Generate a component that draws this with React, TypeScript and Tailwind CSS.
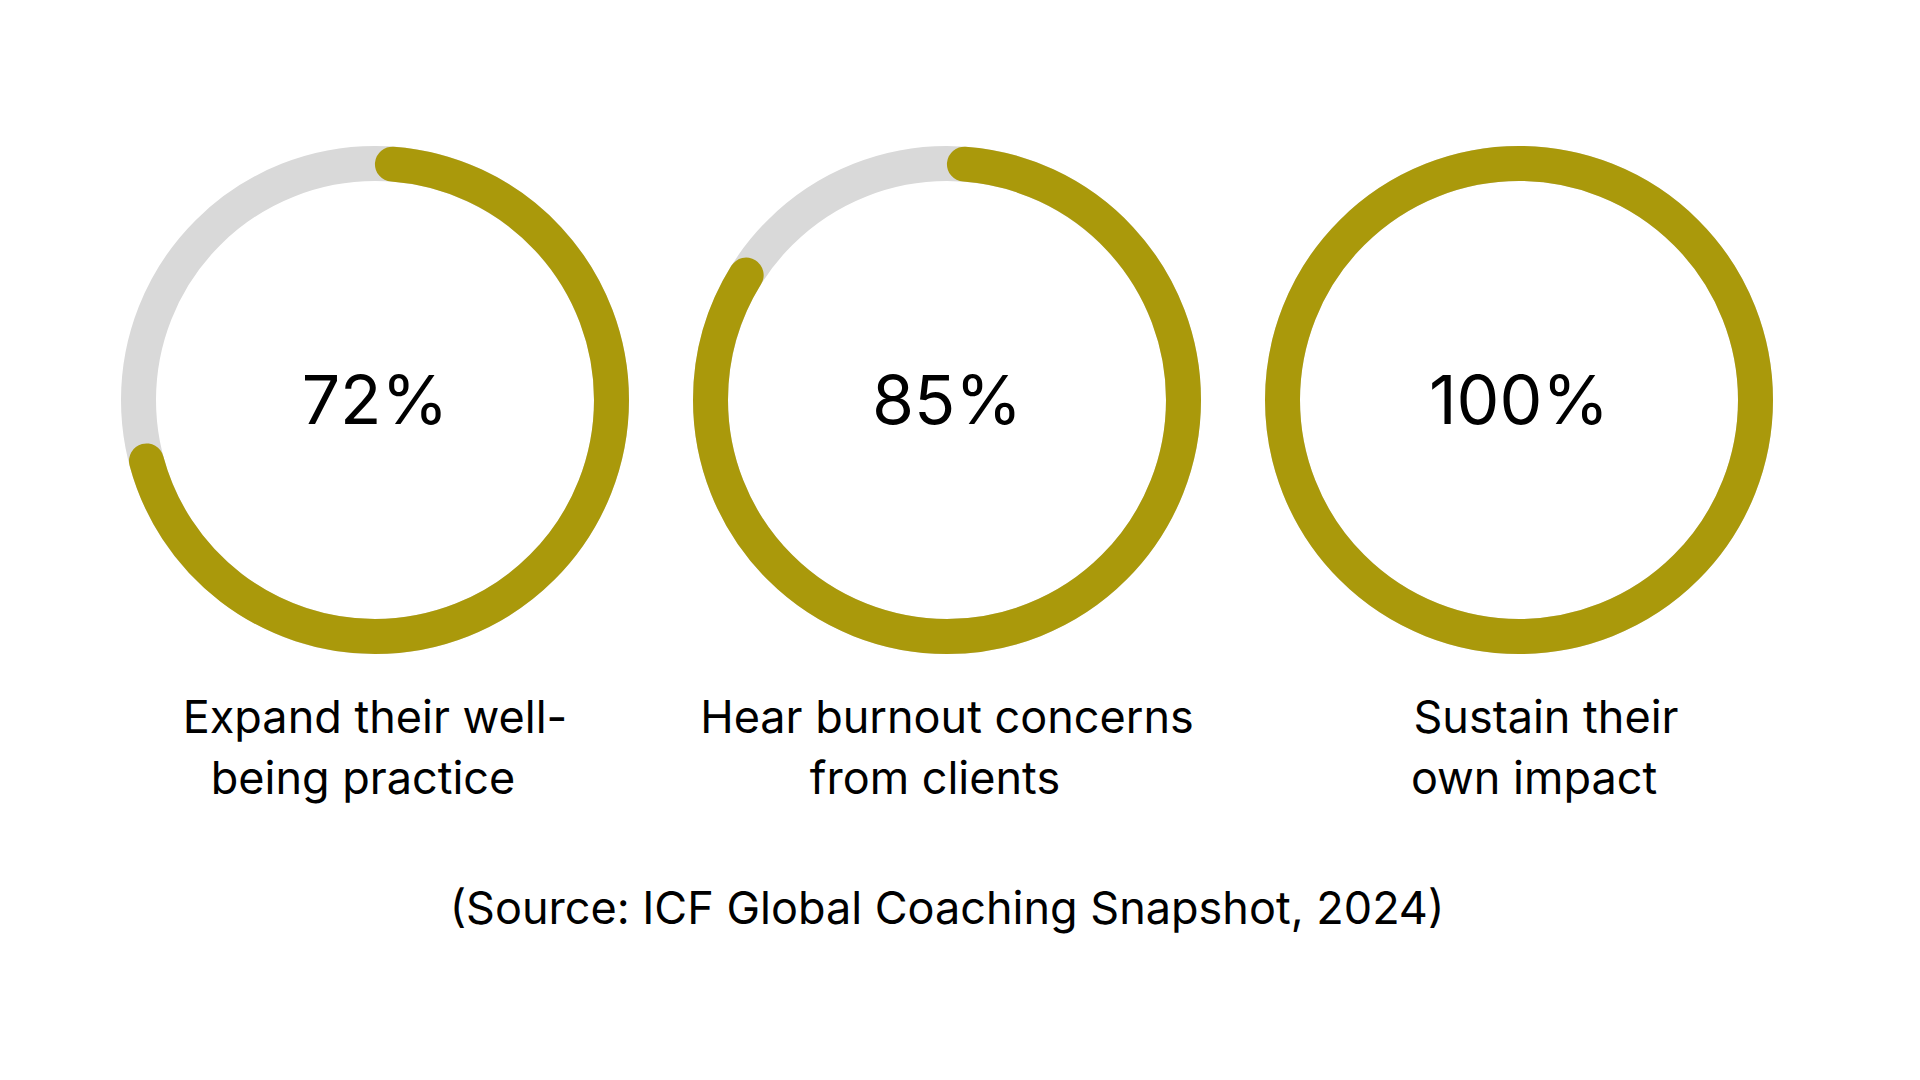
import React from "react";

const GOLD = "#aa990b";
const TRACK = "#d9d9d9";

type Stat = {
  pct: number;
  lines: [string, string];
  shift?: string;
};

const stats: Stat[] = [
  { pct: 72, lines: ["Expand their well-", "being practice"] },
  { pct: 85, lines: ["Hear burnout concerns", "from clients"] },
  { pct: 100, lines: ["Sustain their", "own impact"], shift: "pl-[54px]" },
];

function Ring({ pct }: { pct: number }) {
  const size = 508;
  const stroke = 35;
  const r = (size - stroke) / 2;
  const c = 2 * Math.PI * r;
  const mid = size / 2;
  // round caps stick out by stroke/2 on each end, so trim the dash to keep the arc at pct
  const len = (pct / 100) * c - stroke;

  return (
    <svg width={size} height={size} viewBox={`0 0 ${size} ${size}`} className="[grid-area:1/1]">
      <circle cx={mid} cy={mid} r={r} fill="none" stroke={TRACK} strokeWidth={stroke} />
      {pct >= 100 ? (
        <circle cx={mid} cy={mid} r={r} fill="none" stroke={GOLD} strokeWidth={stroke} />
      ) : (
        <circle
          cx={mid}
          cy={mid}
          r={r}
          fill="none"
          stroke={GOLD}
          strokeWidth={stroke}
          strokeLinecap="round"
          strokeDasharray={`${len} ${c}`}
          strokeDashoffset={-stroke / 2}
          transform={`rotate(-90 ${mid} ${mid})`}
        />
      )}
    </svg>
  );
}

function StatColumn({ stat }: { stat: Stat }) {
  return (
    <div className="flex w-[572px] flex-col items-center">
      <div className="grid place-items-center">
        <Ring pct={stat.pct} />
        <span className="[grid-area:1/1] pb-[3px] text-[68px] leading-none text-black">{stat.pct}%</span>
      </div>
      <div className={`mt-[32px] flex flex-col items-center text-[45px] leading-[61px] text-black ${stat.shift ?? ""}`}>
        <span className="whitespace-nowrap">{stat.lines[0]}</span>
        <span className="whitespace-nowrap pr-6">{stat.lines[1]}</span>
      </div>
    </div>
  );
}

export default function App() {
  return (
    <div className="flex min-h-screen w-full flex-col items-center bg-white pt-[146px] font-['Inter',sans-serif]">
      <div className="flex pr-[26px]">
        {stats.map((s) => (
          <StatColumn key={s.pct} stat={s} />
        ))}
      </div>
      <p className="mt-[70px] pr-[26px] text-[45px] leading-[60px] text-black">
        (Source: ICF Global Coaching Snapshot, 2024)
      </p>
    </div>
  );
}
